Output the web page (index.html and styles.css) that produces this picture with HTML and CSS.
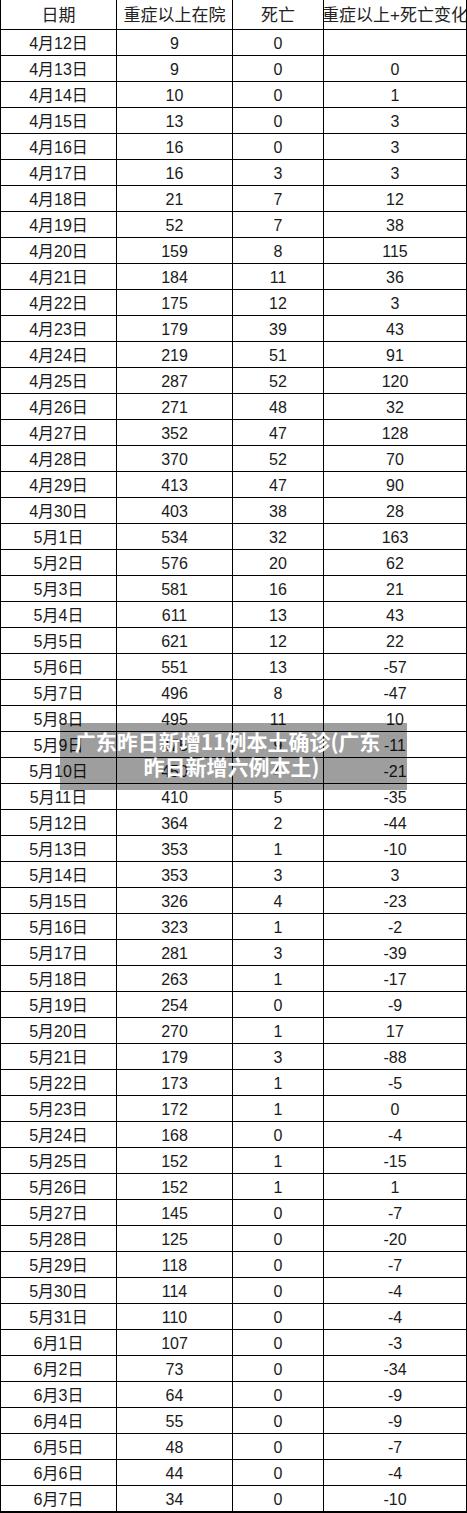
FILE: index.html
```html
<!DOCTYPE html>
<html lang="zh-CN">
<head>
<meta charset="utf-8">
<title>广东重症以上在院及死亡</title>
<link rel="stylesheet" href="styles.css">
</head>
<body>
<div class="sheet">
  <div class="row head"><div class="c">日期</div><div class="c">重症以上在院</div><div class="c">死亡</div><div class="c last">重症以上+死亡变化</div></div>
  <div class="row"><div class="c">4月12日</div><div class="c">9</div><div class="c">0</div><div class="c"></div></div>
  <div class="row"><div class="c">4月13日</div><div class="c">9</div><div class="c">0</div><div class="c">0</div></div>
  <div class="row"><div class="c">4月14日</div><div class="c">10</div><div class="c">0</div><div class="c">1</div></div>
  <div class="row"><div class="c">4月15日</div><div class="c">13</div><div class="c">0</div><div class="c">3</div></div>
  <div class="row"><div class="c">4月16日</div><div class="c">16</div><div class="c">0</div><div class="c">3</div></div>
  <div class="row"><div class="c">4月17日</div><div class="c">16</div><div class="c">3</div><div class="c">3</div></div>
  <div class="row"><div class="c">4月18日</div><div class="c">21</div><div class="c">7</div><div class="c">12</div></div>
  <div class="row"><div class="c">4月19日</div><div class="c">52</div><div class="c">7</div><div class="c">38</div></div>
  <div class="row"><div class="c">4月20日</div><div class="c">159</div><div class="c">8</div><div class="c">115</div></div>
  <div class="row"><div class="c">4月21日</div><div class="c">184</div><div class="c">11</div><div class="c">36</div></div>
  <div class="row"><div class="c">4月22日</div><div class="c">175</div><div class="c">12</div><div class="c">3</div></div>
  <div class="row"><div class="c">4月23日</div><div class="c">179</div><div class="c">39</div><div class="c">43</div></div>
  <div class="row"><div class="c">4月24日</div><div class="c">219</div><div class="c">51</div><div class="c">91</div></div>
  <div class="row"><div class="c">4月25日</div><div class="c">287</div><div class="c">52</div><div class="c">120</div></div>
  <div class="row"><div class="c">4月26日</div><div class="c">271</div><div class="c">48</div><div class="c">32</div></div>
  <div class="row"><div class="c">4月27日</div><div class="c">352</div><div class="c">47</div><div class="c">128</div></div>
  <div class="row"><div class="c">4月28日</div><div class="c">370</div><div class="c">52</div><div class="c">70</div></div>
  <div class="row"><div class="c">4月29日</div><div class="c">413</div><div class="c">47</div><div class="c">90</div></div>
  <div class="row"><div class="c">4月30日</div><div class="c">403</div><div class="c">38</div><div class="c">28</div></div>
  <div class="row"><div class="c">5月1日</div><div class="c">534</div><div class="c">32</div><div class="c">163</div></div>
  <div class="row"><div class="c">5月2日</div><div class="c">576</div><div class="c">20</div><div class="c">62</div></div>
  <div class="row"><div class="c">5月3日</div><div class="c">581</div><div class="c">16</div><div class="c">21</div></div>
  <div class="row"><div class="c">5月4日</div><div class="c">611</div><div class="c">13</div><div class="c">43</div></div>
  <div class="row"><div class="c">5月5日</div><div class="c">621</div><div class="c">12</div><div class="c">22</div></div>
  <div class="row"><div class="c">5月6日</div><div class="c">551</div><div class="c">13</div><div class="c">-57</div></div>
  <div class="row"><div class="c">5月7日</div><div class="c">496</div><div class="c">8</div><div class="c">-47</div></div>
  <div class="row"><div class="c">5月8日</div><div class="c">495</div><div class="c">11</div><div class="c">10</div></div>
  <div class="row"><div class="c">5月9日</div><div class="c">475</div><div class="c">9</div><div class="c">-11</div></div>
  <div class="row"><div class="c">5月10日</div><div class="c">450</div><div class="c">4</div><div class="c">-21</div></div>
  <div class="row"><div class="c">5月11日</div><div class="c">410</div><div class="c">5</div><div class="c">-35</div></div>
  <div class="row"><div class="c">5月12日</div><div class="c">364</div><div class="c">2</div><div class="c">-44</div></div>
  <div class="row"><div class="c">5月13日</div><div class="c">353</div><div class="c">1</div><div class="c">-10</div></div>
  <div class="row"><div class="c">5月14日</div><div class="c">353</div><div class="c">3</div><div class="c">3</div></div>
  <div class="row"><div class="c">5月15日</div><div class="c">326</div><div class="c">4</div><div class="c">-23</div></div>
  <div class="row"><div class="c">5月16日</div><div class="c">323</div><div class="c">1</div><div class="c">-2</div></div>
  <div class="row"><div class="c">5月17日</div><div class="c">281</div><div class="c">3</div><div class="c">-39</div></div>
  <div class="row"><div class="c">5月18日</div><div class="c">263</div><div class="c">1</div><div class="c">-17</div></div>
  <div class="row"><div class="c">5月19日</div><div class="c">254</div><div class="c">0</div><div class="c">-9</div></div>
  <div class="row"><div class="c">5月20日</div><div class="c">270</div><div class="c">1</div><div class="c">17</div></div>
  <div class="row"><div class="c">5月21日</div><div class="c">179</div><div class="c">3</div><div class="c">-88</div></div>
  <div class="row"><div class="c">5月22日</div><div class="c">173</div><div class="c">1</div><div class="c">-5</div></div>
  <div class="row"><div class="c">5月23日</div><div class="c">172</div><div class="c">1</div><div class="c">0</div></div>
  <div class="row"><div class="c">5月24日</div><div class="c">168</div><div class="c">0</div><div class="c">-4</div></div>
  <div class="row"><div class="c">5月25日</div><div class="c">152</div><div class="c">1</div><div class="c">-15</div></div>
  <div class="row"><div class="c">5月26日</div><div class="c">152</div><div class="c">1</div><div class="c">1</div></div>
  <div class="row"><div class="c">5月27日</div><div class="c">145</div><div class="c">0</div><div class="c">-7</div></div>
  <div class="row"><div class="c">5月28日</div><div class="c">125</div><div class="c">0</div><div class="c">-20</div></div>
  <div class="row"><div class="c">5月29日</div><div class="c">118</div><div class="c">0</div><div class="c">-7</div></div>
  <div class="row"><div class="c">5月30日</div><div class="c">114</div><div class="c">0</div><div class="c">-4</div></div>
  <div class="row"><div class="c">5月31日</div><div class="c">110</div><div class="c">0</div><div class="c">-4</div></div>
  <div class="row"><div class="c">6月1日</div><div class="c">107</div><div class="c">0</div><div class="c">-3</div></div>
  <div class="row"><div class="c">6月2日</div><div class="c">73</div><div class="c">0</div><div class="c">-34</div></div>
  <div class="row"><div class="c">6月3日</div><div class="c">64</div><div class="c">0</div><div class="c">-9</div></div>
  <div class="row"><div class="c">6月4日</div><div class="c">55</div><div class="c">0</div><div class="c">-9</div></div>
  <div class="row"><div class="c">6月5日</div><div class="c">48</div><div class="c">0</div><div class="c">-7</div></div>
  <div class="row"><div class="c">6月6日</div><div class="c">44</div><div class="c">0</div><div class="c">-4</div></div>
  <div class="row"><div class="c">6月7日</div><div class="c">34</div><div class="c">0</div><div class="c">-10</div></div>
  <div class="caption"><span class="line">广东昨日新增11例本土确诊(广东</span><span class="line">昨日新增六例本土)</span></div>
</div>
</body>
</html>
```
FILE: styles.css
```css
html, body {
  margin: 0;
  padding: 0;
  background: #ffffff;
}
body {
  width: 467px;
  font-family: "Liberation Sans", "Noto Sans CJK SC", Arial, sans-serif;
  color: #1a1a1a;
}
.sheet {
  position: relative;
  width: 467px;
  box-sizing: border-box;
  border-left: 1px solid #000;
  border-right: 1px solid #000;
  border-bottom: 1px solid #000;
}
.row {
  display: grid;
  grid-template-columns: 116px 116px 91px 1fr;
  height: 26px;
  box-sizing: border-box;
  border-bottom: 1px solid #000;
}
.row:last-of-type {
  border-bottom: none;
  height: 25px;
}
.row.head {
  height: 30px;
}
.c {
  display: flex;
  align-items: center;
  justify-content: center;
  box-sizing: border-box;
  padding-top: 3px;
  border-right: 1px solid #000;
  font-size: 16px;
  line-height: 1;
  white-space: nowrap;
  overflow: visible;
}
.head .c {
  font-size: 17px;
  padding-top: 2px;
  color: #222;
}
.row .c:last-child {
  border-right: none;
}
.head .last {
  overflow: hidden;
}
.caption {
  position: absolute;
  left: 59px;
  top: 723px;
  width: 347px;
  height: 67px;
  box-sizing: border-box;
  padding: 0 12px 6px 0;
  background: rgba(0, 0, 0, 0.38);
  display: flex;
  flex-direction: column;
  align-items: center;
  justify-content: center;
  color: #ffffff;
  font-family: "Noto Sans CJK SC", "Liberation Sans", sans-serif;
  font-weight: 700;
  font-size: 21px;
  line-height: 25px;
}
.caption .line {
  display: block;
  white-space: nowrap;
}
.caption .line + .line {
  margin-left: 8px;
}
```
